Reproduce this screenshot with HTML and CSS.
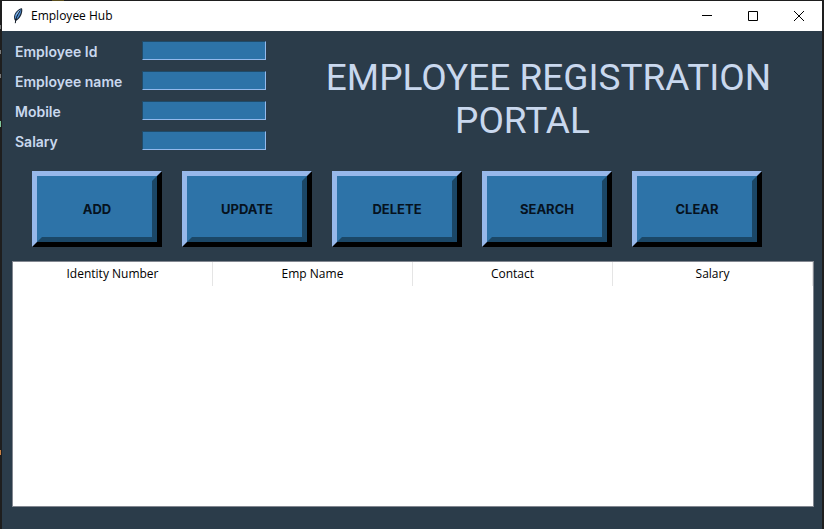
FILE: index.html
```html
<!DOCTYPE html>
<html lang="en">
<head>
<meta charset="utf-8">
<title>Employee Hub</title>
<link rel="stylesheet" href="styles.css">
</head>
<body>
<div class="window">
  <header class="titlebar">
    <svg class="feather" viewBox="0 0 16 16" aria-hidden="true">
      <path d="M5.500 13 C3.500 11 3.500 7 6 4 C8 1.500 10.500 0 12 .2 C13 3 11.500 8 9 10.500 C7.500 12.200 6.500 12.500 5.500 13 Z" fill="#1c2735"/>
      <path d="M5 10.500 C4.500 7 6.500 3 11.200 1.200 C11.500 4 10 8 7 11 Z" fill="#4f8fd3"/>
      <path d="M5.300 8 L8.500 3 L10.500 1.800 L8 6 Z" fill="#a9cdf2"/>
      <path d="M5.300 15.200 C5.500 11.500 7 7 10.300 2.500" fill="none" stroke="#111a26"/>
    </svg>
    <span class="caption">Employee Hub</span>
    <div class="controls">
      <button type="button" class="control" aria-label="Minimize"><svg viewBox="0 0 10 10"><path d="M0 4.500H10"/></svg></button>
      <button type="button" class="control" aria-label="Maximize"><svg viewBox="0 0 10 10"><path d="M.5 .5H9.500V9.500H.5Z"/></svg></button>
      <button type="button" class="control" aria-label="Close"><svg viewBox="0 0 10 10"><path d="M0 0L10 10M10 0L0 10"/></svg></button>
    </div>
  </header>
  <main class="content">
    <section class="top">
      <form class="fields">
        <label for="emp-id">Employee Id</label><input id="emp-id" type="text">
        <label for="emp-name">Employee name</label><input id="emp-name" type="text">
        <label for="mobile">Mobile</label><input id="mobile" type="text">
        <label for="salary">Salary</label><input id="salary" type="text">
      </form>
      <h1 class="heading">EMPLOYEE REGISTRATION <span class="second-line">PORTAL</span></h1>
    </section>
    <div class="actions">
      <button type="button" class="action">ADD</button>
      <button type="button" class="action">UPDATE</button>
      <button type="button" class="action">DELETE</button>
      <button type="button" class="action">SEARCH</button>
      <button type="button" class="action">CLEAR</button>
    </div>
    <div class="records">
      <table>
        <thead>
          <tr><th scope="col">Identity Number</th><th scope="col">Emp Name</th><th scope="col">Contact</th><th scope="col">Salary</th></tr>
        </thead>
        <tbody></tbody>
      </table>
    </div>
  </main>
</div>
</body>
</html>
```
FILE: styles.css
```css
* {
  box-sizing: border-box;
}

/* The desktop shows as a thin dark edge round the window. */
body {
  margin: 0;
  padding: 1px 2px 0;
  min-height: 100vh;
  display: flex;
  background:
    linear-gradient(#7a7a7a, #7a7a7a) 0 25px / 1px 4px no-repeat,
    linear-gradient(#7a7a7a, #7a7a7a) 0 50px / 1px 4px no-repeat,
    linear-gradient(#7a7a7a, #7a7a7a) 0 74px / 1px 4px no-repeat,
    linear-gradient(#7fc79a, #7fc79a) 0 121px / 1px 6px no-repeat,
    linear-gradient(#c87f42, #c87f42) 0 450px / 1px 5px no-repeat,
    linear-gradient(#5c4f1e, #5c4f1e) 52px 0 / 12px 1px no-repeat,
    #1e1e1e;
}

.window {
  flex: 1;
  display: flex;
  flex-direction: column;
  background: #2b3c4a;
}

.titlebar {
  display: flex;
  align-items: center;
  height: 30px;
  padding-left: 8px;
  background: #fff;
}

.feather {
  width: 16px;
  height: 16px;
  margin-right: 5px;
}

.caption {
  font: 12px/16px "Open Sans", sans-serif;
  color: #000;
}

.controls {
  display: flex;
  align-self: stretch;
  margin-left: auto;
}

.control {
  display: flex;
  align-items: center;
  justify-content: center;
  width: 46px;
  padding: 0;
  border: 0;
  background: none;
}

.control svg {
  width: 10px;
  height: 10px;
  fill: none;
  stroke: #000;
}

.content {
  flex: 1;
  display: flex;
  flex-direction: column;
  padding: 10px 8px 22px 10px;
}

.top {
  display: flex;
  height: 130px;
}

.fields {
  display: grid;
  grid-template-columns: 127px 124px;
  grid-auto-rows: 20px;
  row-gap: 10px;
  padding-left: 3px;
}

.fields label {
  font: 600 14px/22px Inter, sans-serif;
  color: #c9d8ee;
}

.fields input {
  width: 100%;
  height: 19px;
  padding: 0 2px;
  border: 1px solid;
  border-color: #1f4a69 #93b9ec #93b9ec #1f4a69;
  border-radius: 0;
  background: #2d73a8;
  color: #000;
  outline: 0;
}

.heading {
  flex: 1;
  margin: 15px 0 0;
  padding-left: 17px;
  font: 400 37px/43px Roboto, sans-serif;
  color: #c9d8ee;
  text-align: center;
}

.second-line {
  display: block;
  padding-right: 52px;
}

.actions {
  display: flex;
  gap: 20px;
  padding: 0 20px;
}

.action {
  position: relative;
  width: 130px;
  height: 76px;
  padding: 0;
  border: 5px solid;
  border-color: #97b8ea #000 #000 #97b8ea;
  border-radius: 0;
  background: #2d73a8;
  color: #06121e;
  font: 700 13px/16px Inter, sans-serif;
}

.action::after {
  content: "";
  position: absolute;
  inset: 0;
  border: 5px solid transparent;
  border-right-color: #1b4767;
  border-bottom-color: #1b4767;
}

.records {
  flex: 1;
  margin-top: 14px;
  border: 1px solid #828790;
  background: #fff;
}

.records table {
  width: 100%;
  border-collapse: separate;
  border-spacing: 0;
  table-layout: fixed;
}

.records th {
  height: 24px;
  padding: 0;
  border-right: 1px solid #e5e5e5;
  font: 12px/16px "Open Sans", sans-serif;
  color: #000;
}
```
